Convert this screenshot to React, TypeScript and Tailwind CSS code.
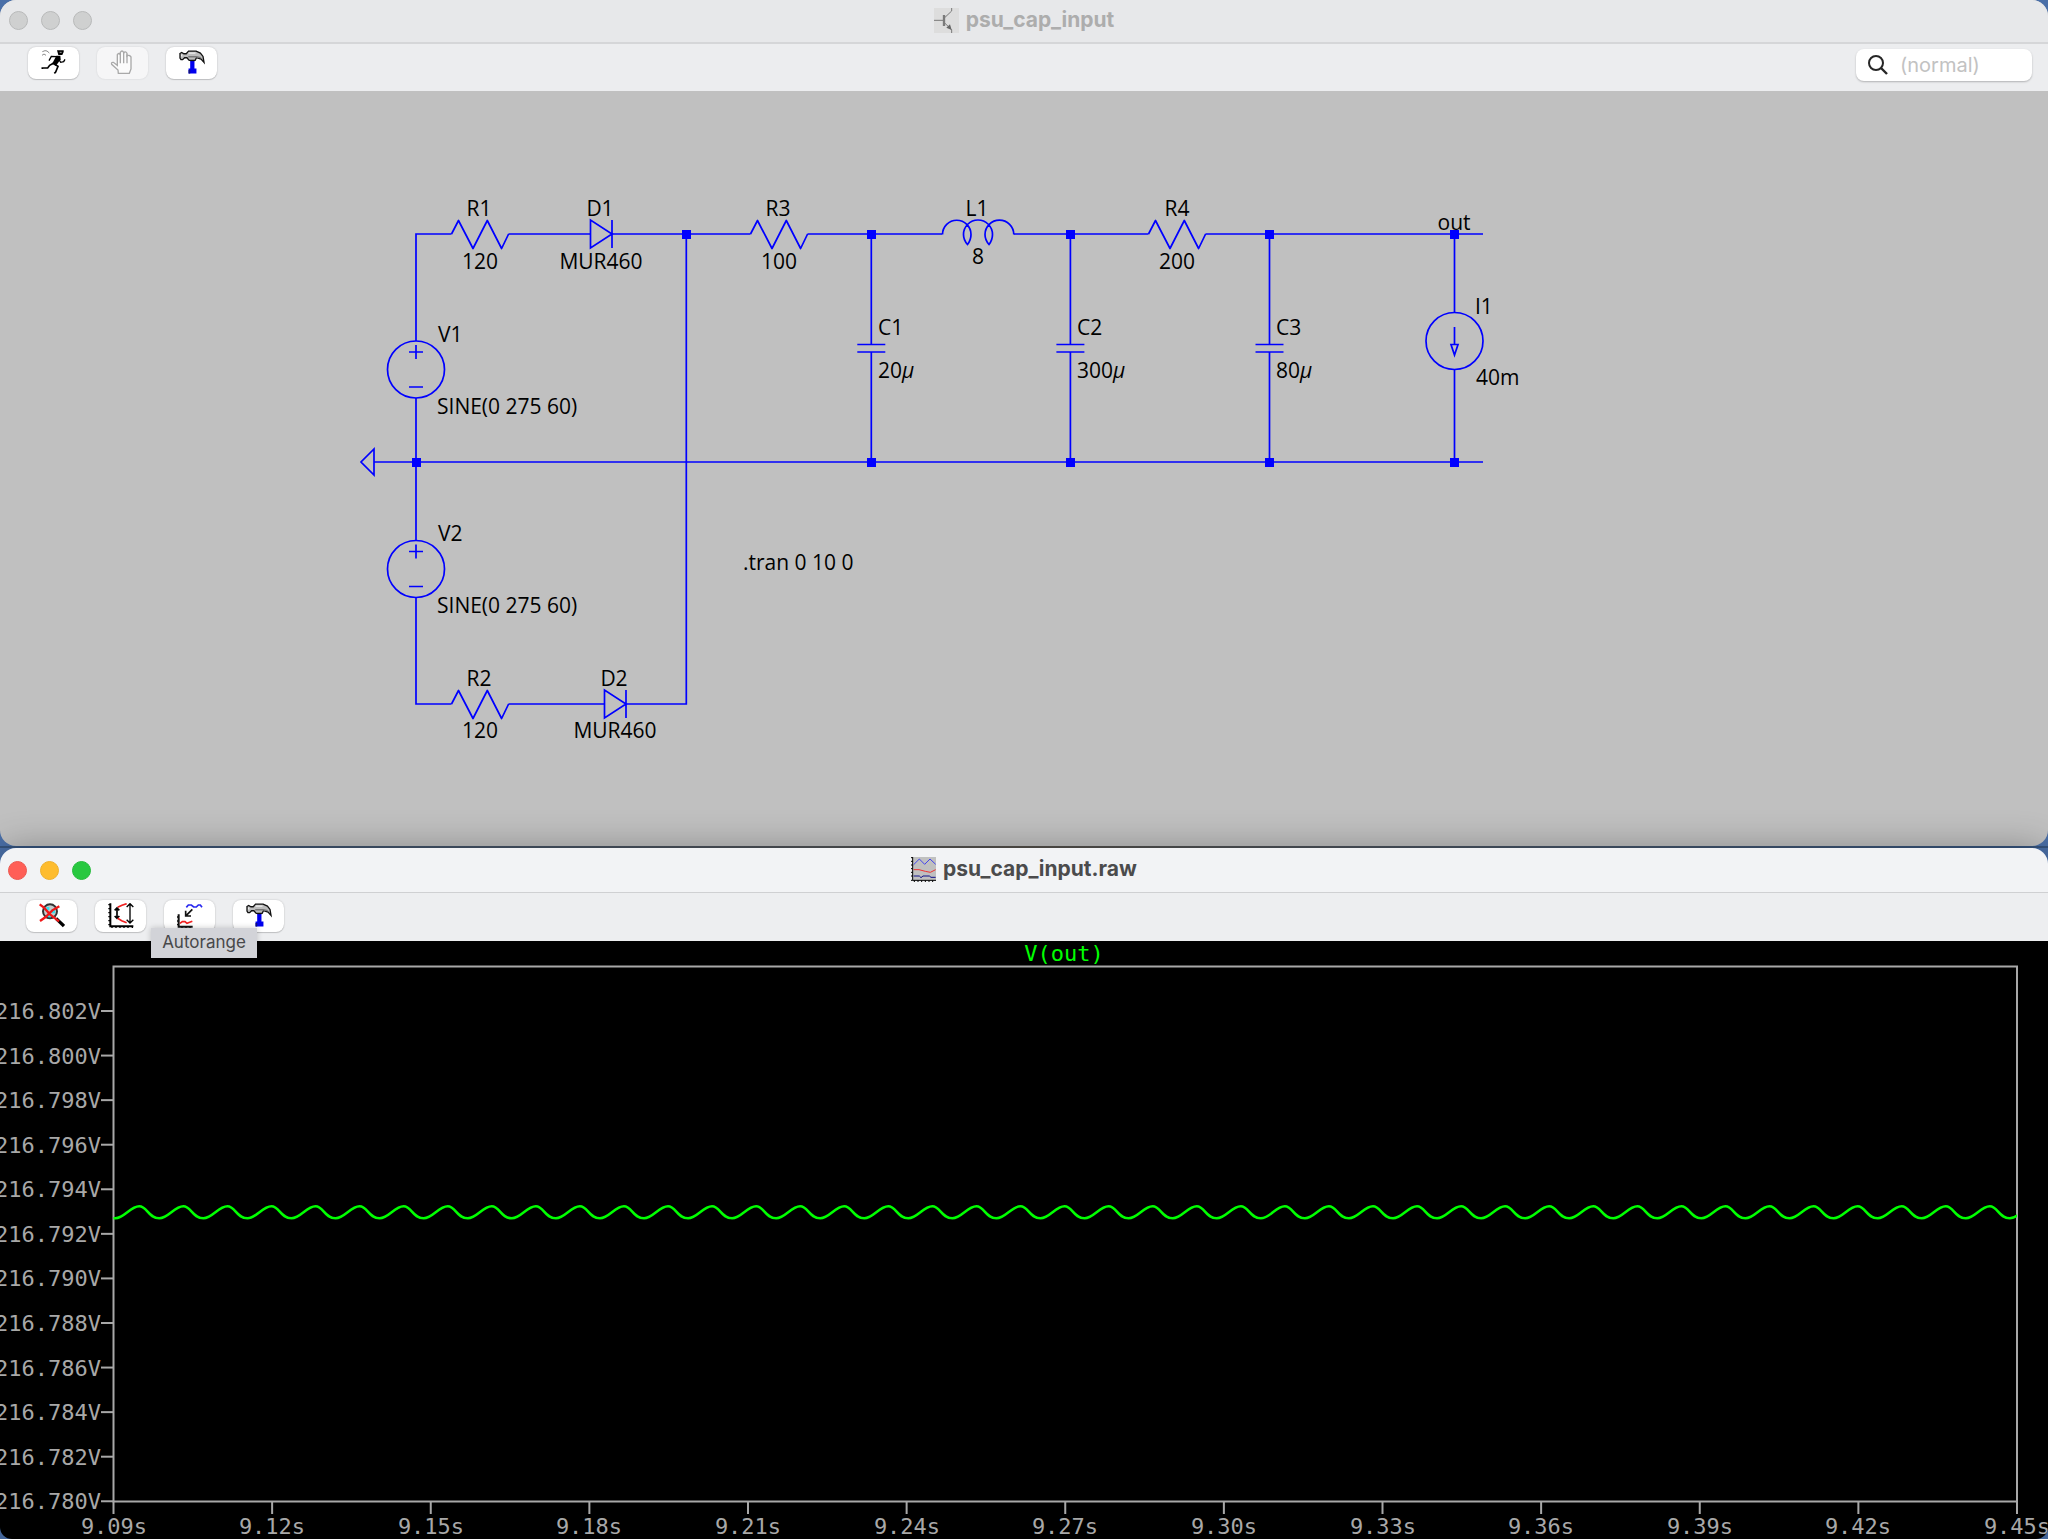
import type { ReactNode } from 'react'

interface Label {
  text: string
  x: number
  y: number
  anchor?: 'start' | 'middle'
}

const LABELS: Label[] = [
  { text: 'R1', x: 479, y: 125, anchor: 'middle' },
  { text: '120', x: 480, y: 178, anchor: 'middle' },
  { text: 'D1', x: 600, y: 125, anchor: 'middle' },
  { text: 'MUR460', x: 601, y: 178, anchor: 'middle' },
  { text: 'R3', x: 778, y: 125, anchor: 'middle' },
  { text: '100', x: 779, y: 178, anchor: 'middle' },
  { text: 'L1', x: 977, y: 125, anchor: 'middle' },
  { text: '8', x: 978, y: 173, anchor: 'middle' },
  { text: 'R4', x: 1177, y: 125, anchor: 'middle' },
  { text: '200', x: 1177, y: 178, anchor: 'middle' },
  { text: 'out', x: 1454, y: 139, anchor: 'middle' },
  { text: 'V1', x: 438, y: 251 },
  { text: 'SINE(0 275 60)', x: 437, y: 323 },
  { text: 'C1', x: 878, y: 244 },
  { text: '20µ', x: 878, y: 287 },
  { text: 'C2', x: 1077, y: 244 },
  { text: '300µ', x: 1077, y: 287 },
  { text: 'C3', x: 1276, y: 244 },
  { text: '80µ', x: 1276, y: 287 },
  { text: 'I1', x: 1475, y: 223 },
  { text: '40m', x: 1476, y: 294 },
  { text: 'V2', x: 438, y: 450 },
  { text: 'SINE(0 275 60)', x: 437, y: 522 },
  { text: 'R2', x: 479, y: 595, anchor: 'middle' },
  { text: '120', x: 480, y: 647, anchor: 'middle' },
  { text: 'D2', x: 614, y: 595, anchor: 'middle' },
  { text: 'MUR460', x: 615, y: 647, anchor: 'middle' },
  { text: '.tran 0 10 0', x: 743, y: 479 },
]

const TOP = 143
const GROUND = 371
const LOWER = 613

const JUNCTIONS = [
  [686, TOP],
  [871, TOP],
  [1070, TOP],
  [1269, TOP],
  [1454, TOP],
  [416, GROUND],
  [871, GROUND],
  [1070, GROUND],
  [1269, GROUND],
  [1454, GROUND],
]

const Y_TICKS = Array.from({ length: 12 }, (_, i) => `${(216.802 - i * 0.002).toFixed(3)}V`)
const X_TICKS = Array.from({ length: 13 }, (_, i) => `${(9.09 + i * 0.03).toFixed(2)}s`)

const PLOT = { left: 113.5, right: 2017, top: 25.5, bottom: 560.5 }
const X_STEP = (PLOT.right - PLOT.left) / 12
const Y_STEP = 44.57

function ripplePath() {
  const crest = 265.3
  const trough = 277.3
  const period = 44.06
  let d = `M 112 ${trough} H 115.3`
  for (let i = 0; i < 44; i++) {
    const start = 115.3 + i * period
    const peak = start + 24
    const end = start + period
    d += ` C ${start + 9} ${trough} ${peak - 9} ${crest} ${peak} ${crest}`
    d += ` C ${peak + 8} ${crest} ${end - 11} ${trough} ${end} ${trough}`
  }
  return d
}

function Resistor({ x, y }: { x: number; y: number }) {
  return (
    <path
      d={`M${x} ${y} l7 -13.5 l14.5 28 l14.3 -28 l14.3 28 l7 -14.5`}
      strokeLinejoin="round"
    />
  )
}

function Diode({ x, y }: { x: number; y: number }) {
  return <path d={`M${x} ${y - 14} V${y + 14} L${x + 21.5} ${y} Z M${x + 21.5} ${y - 14} v28`} />
}

function Capacitor({ x }: { x: number }) {
  return <path d={`M${x} ${TOP} V253.5 M${x - 14} 253.5 h28 M${x - 14} 261 h28 M${x} 261 V${GROUND}`} />
}

function VoltageSource({ y }: { y: number }) {
  return (
    <>
      <circle cx="416" cy={y} r="28.5" />
      <path d={`M409 ${y - 17.5} h14 M416 ${y - 24.5} v14 M409 ${y + 17.5} h14`} />
    </>
  )
}

function Schematic() {
  return (
    <svg viewBox="0 0 2048 755" className="block h-auto w-full" role="img" aria-label="Schematic">
      <g fill="none" stroke="#0000ff" strokeWidth="1.7">
        <path d={`M451.5 ${TOP} H416 V250 M416 307 V449.5 M416 506.5 V${LOWER} H451.5`} />
        <path d={`M508.5 ${TOP} H590 M611.5 ${TOP} H750.5 M807.5 ${TOP} H942 M1014 ${TOP} H1148.5 M1205.5 ${TOP} H1483`} />
        <path d={`M374 ${GROUND} H1483 M374 358 V384 L361 ${GROUND} Z`} />
        <path d={`M508.5 ${LOWER} H604.5 M626 ${LOWER} H686.3 V${TOP}`} />
        <Resistor x={451.5} y={TOP} />
        <Resistor x={750.5} y={TOP} />
        <Resistor x={1148.5} y={TOP} />
        <Resistor x={451.5} y={LOWER} />
        <Diode x={590.5} y={TOP} />
        <Diode x={604.5} y={LOWER} />
        <path d="M942.5 143.5 A14.2 14.2 0 0 1 971 143.5 Q971 149 967.5 153.5 Q963.5 149 963.5 143.5 A14.3 14.3 0 0 1 992.5 143.5 Q992.5 149 989 153.5 Q985 149 985 143.5 A14.3 14.3 0 0 1 1013.8 143.5" />
        <Capacitor x={871.3} />
        <Capacitor x={1070.4} />
        <Capacitor x={1269.5} />
        <VoltageSource y={278.5} />
        <VoltageSource y={478} />
        <circle cx="1454.5" cy="250" r="28.5" />
        <path d={`M1454.5 ${TOP} V221.5 M1454.5 278.5 V${GROUND}`} />
        <path d="M1454.5 236 V253.5 M1451 253.5 h7 l-3.5 10.5 Z" />
      </g>
      <g fill="#000000" className="font-['Open_Sans',sans-serif] text-[21px]">
        {LABELS.map((label) => (
          <text key={`${label.x}-${label.y}`} x={label.x} y={label.y} textAnchor={label.anchor}>
            {label.text.replace('µ', '')}
            {label.text.endsWith('µ') && <tspan className="italic">µ</tspan>}
          </text>
        ))}
      </g>
      <g fill="#0000ff">
        {JUNCTIONS.map(([x, y]) => (
          <rect key={`${x}-${y}`} x={x - 4} y={y - 4} width="9" height="9" />
        ))}
      </g>
    </svg>
  )
}

function Waveform() {
  return (
    <svg viewBox="0 0 2048 598" className="block h-auto w-full" role="img" aria-label="V(out)">
      <clipPath id="plot-area">
        <rect x={PLOT.left} y={PLOT.top} width={PLOT.right - PLOT.left} height={PLOT.bottom - PLOT.top} />
      </clipPath>
      <g stroke="#a8a8a8" strokeWidth="2" fill="none">
        <rect x={PLOT.left} y={PLOT.top} width={PLOT.right - PLOT.left} height={PLOT.bottom - PLOT.top} />
        {Y_TICKS.map((tick, i) => (
          <path key={tick} d={`M101 ${70 + i * Y_STEP} H${PLOT.left}`} />
        ))}
        {X_TICKS.map((tick, i) => (
          <path key={tick} d={`M${PLOT.left + i * X_STEP} ${PLOT.bottom} v12.5`} />
        ))}
      </g>
      <path d={ripplePath()} clipPath="url(#plot-area)" fill="none" stroke="#00ff00" strokeWidth="2.5" />
      <g fill="#a8a8a8" className="font-['DejaVu_Sans_Mono',monospace] text-[22px]">
        {Y_TICKS.map((tick, i) => (
          <text key={tick} x="101" y={78 + Math.round(i * Y_STEP)} textAnchor="end">
            {tick}
          </text>
        ))}
        {X_TICKS.map((tick, i) => (
          <text key={tick} x={Math.round(PLOT.left + i * X_STEP)} y="593" textAnchor="middle">
            {tick}
          </text>
        ))}
        <text x="1064" y="20" textAnchor="middle" fill="#00ff00">
          V(out)
        </text>
      </g>
    </svg>
  )
}

function RunIcon() {
  return (
    <svg viewBox="0 0 75 75" className="size-[25px]" fill="none" stroke="#000" strokeWidth="5">
      <path d="M48 1 H68 V6 L64 15 H52 Z" fill="#000" stroke="none" />
      <path d="M56 7 h6" stroke="#999" strokeWidth="3" />
      <path d="M46 17 L58 17 L59 28 L45 47 L33 42 Z" fill="#000" stroke="none" />
      <path d="M48 20 L31 19 L24 32" strokeWidth="4" />
      <path d="M54 29 L59 37 L68 35 L72 28" strokeWidth="4" />
      <path d="M37 40 L26 46 L20 54 H4 V57" />
      <path d="M41 43 L51 49 L44 66 L40 70" />
      <path d="M4 5 L12 2 L18 3 L25 9 M3 16 L9 12 L15 16" stroke="#8a8a8a" strokeWidth="3" />
    </svg>
  )
}

function HaltIcon() {
  return (
    <svg viewBox="0 0 75 75" className="size-[25px]" fill="#fbfbfb" stroke="#a9a9a9" strokeWidth="4">
      <path d="M25 70 L24 60 L5 43 Q3 36 10 37 L22 46 V14 Q26 7 31 14 V7 Q36 -1 41 7 V9 Q46 2 51 10 V18 Q57 13 63 21 V57 L58 70 Z" />
      <path d="M31 13 V40 M41 7 V40 M51 13 V40" />
    </svg>
  )
}

function HammerIcon() {
  return (
    <svg viewBox="0 0 79 75" className="h-[25px] w-[26px]" fill="none">
      <path d="M34 27 H47 V56 H53 V71 H29 V56 H34 Z" fill="#0000ee" />
      <path d="M34 27 H47 V34 H34 Z M29 60 H34 V71 H29 Z" fill="#111177" />
      <path
        d="M3 10 L8 7 L15 11 H22 L29 3 H52 L65 9 L73 19 L76 37 L67 27 L53 23 L49 31 H31 L24 23 H17 L11 29 H6 L3 24 Z"
        fill="#bdbdbd"
        stroke="#111"
        strokeWidth="4"
      />
      <path d="M29 9 H50 M8 13 V19" stroke="#eeeeee" strokeWidth="4" />
      <path d="M28 20 H52 L66 23" stroke="#777" strokeWidth="4" />
    </svg>
  )
}

function ZoomBackIcon() {
  return (
    <svg viewBox="0 0 78 75" className="h-[25px] w-[26px]" fill="none">
      <path d="M51 46 L75 69" stroke="#000" strokeWidth="10" />
      <circle cx="33" cy="25" r="21" fill="#c5cccc" stroke="#333" strokeWidth="6" />
      <path d="M22 12 h9 v9 h-9 Z M38 18 h10 v13 h-10 Z M27 35 h9 v8 h-9 Z" fill="#35e0ee" />
      <path d="M2 4 L14 13 L33 34 L60 55 M61 10 L40 22 L20 42 L3 54" stroke="#f01818" strokeWidth="7" />
    </svg>
  )
}

function AxesIcon() {
  return (
    <svg viewBox="0 0 78 75" className="h-[25px] w-[26px]" fill="none" stroke="#000" strokeWidth="5">
      <path d="M7 1 V70 H76" strokeWidth="6" />
      <path d="M1 5 h6 M1 17 h6 M1 29 h6 M1 41 h6 M1 53 h6 M1 65 h6 M12 75 v-5 M24 75 v-5 M36 75 v-5 M48 75 v-5 M60 75 v-5 M73 75 v-5" strokeWidth="4" />
      <path d="M27 15 V46 M20 22 L27 15 L34 22 M20 39 L27 46 L34 39" />
      <path d="M66 2 V60 M56 12 L66 2 L76 12 M56 50 L66 60 L76 50" strokeWidth="4" />
      <path d="M29 13 L42 7 L56 2 M29 46 L41 53 L56 59" stroke="#f02020" />
    </svg>
  )
}

function AutorangeIcon() {
  return (
    <svg viewBox="0 0 78 75" className="h-[25px] w-[26px]" fill="none" stroke="#111" strokeWidth="5">
      <path d="M28 13 L34 6 H43 L50 12 H58 L64 6 H70 L75 13" stroke="#2828f0" />
      <path d="M46 19 L28 37 M26 23 V39 H42" />
      <path d="M5 34 V71 H47" strokeWidth="6" />
      <path d="M0 42 h5 M0 54 h5 M0 65 h5 M15 75 v-5 M27 75 v-5 M39 75 v-5" strokeWidth="4" />
      <path d="M9 61 L16 56 L24 56 L30 61 L38 58 L46 55" stroke="#f02020" />
    </svg>
  )
}

function TransistorIcon() {
  return (
    <svg viewBox="0 0 75 75" className="size-[25px] bg-[#dddddd]" fill="none" stroke="#7a7a7a" strokeWidth="3">
      <path d="M0 37 H28" />
      <path d="M30 21 V54" strokeWidth="7" />
      <path d="M33 28 L53 9 V0 M33 46 L53 65 V75" />
      <path d="M53 66 L37 59 L48 49 Z" fill="#666" stroke="none" />
    </svg>
  )
}

function RawFileIcon() {
  return (
    <svg viewBox="0 0 75 75" className="size-[25px]" fill="none" strokeWidth="3">
      <rect x="5" width="70" height="70" fill="#c0c0c0" />
      <path d="M8 23 L25 6 L41 22 L57 6 L74 22" stroke="#4444ee" />
      <path d="M8 38 H24 L43 43 L58 46 L74 38" stroke="#ee3333" />
      <path d="M8 57 H25 L30 62 L36 57 H55 L60 61 H74" stroke="#111188" />
      <path d="M5 0 V70 H75 M0 2 h5 M0 13 h5 M0 24 h5 M0 35 h5 M0 46 h5 M0 57 h5 M0 70 h5 M10 75 v-5 M21 75 v-5 M32 75 v-5 M43 75 v-5 M54 75 v-5 M65 75 v-5" stroke="#000" />
    </svg>
  )
}

function ToolButton({ label, disabled, children }: { label: string; disabled?: boolean; children: ReactNode }) {
  return (
    <button
      type="button"
      aria-label={label}
      disabled={disabled}
      className="flex h-8 w-[51px] items-start justify-center rounded-lg bg-white pt-[3px] shadow-[0_0_2px_rgba(0,0,0,0.2),0_1px_1px_rgba(0,0,0,0.15)] disabled:bg-[#f6f6f7] disabled:shadow-[0_0_2px_rgba(0,0,0,0.12)]"
    >
      {children}
    </button>
  )
}

function WindowLights({ active }: { active?: boolean }) {
  const dot = 'size-[19px] rounded-full border'
  if (!active) {
    return (
      <div className="flex gap-[13px]">
        <span className={`${dot} border-[#b8b9b9] bg-[#cfd0d0]`} />
        <span className={`${dot} border-[#b8b9b9] bg-[#cfd0d0]`} />
        <span className={`${dot} border-[#b8b9b9] bg-[#cfd0d0]`} />
      </div>
    )
  }
  return (
    <div className="flex gap-[13px]">
      <span className={`${dot} border-[#ec5850] bg-[#ff5f57]`} />
      <span className={`${dot} border-[#eeb02c] bg-[#febc2e]`} />
      <span className={`${dot} border-[#25bb3b] bg-[#28c840]`} />
    </div>
  )
}

export default function App() {
  return (
    <main className="flex min-h-screen flex-col bg-[#4a6fa8] font-['Inter',sans-serif]">
      <section className="overflow-hidden rounded-2xl bg-[#c0c0c0]">
        <header className="grid h-11 grid-cols-[1fr_auto_1fr] items-center border-b-2 border-[#d5d6d8] bg-[#e7e8ea] px-[9px] pb-[2px]">
          <WindowLights />
          <h1 className="flex items-center gap-[7px] text-[21px] leading-6 font-bold text-[#adadad]">
            <TransistorIcon />
            psu_cap_input
          </h1>
        </header>
        <div className="flex h-[47px] items-start justify-between bg-[#ecedef] pt-[3px] pr-4 pl-7">
          <div className="flex gap-[18px]">
            <ToolButton label="Run">
              <RunIcon />
            </ToolButton>
            <ToolButton label="Halt" disabled>
              <HaltIcon />
            </ToolButton>
            <ToolButton label="Control panel">
              <HammerIcon />
            </ToolButton>
          </div>
          <label className="mt-[2px] flex h-8 w-44 items-center gap-3 rounded-lg bg-white pl-3 shadow-[0_1px_2px_rgba(0,0,0,0.25)]">
            <svg viewBox="0 0 20 20" className="size-5 shrink-0" fill="none" stroke="#262626" strokeWidth="2">
              <circle cx="8" cy="8" r="7" />
              <path d="M13 13 L19 19" strokeWidth="2.4" />
            </svg>
            <input
              type="text"
              aria-label="Search"
              placeholder="(normal)"
              className="w-full min-w-0 bg-transparent text-[20px] outline-none placeholder:text-[#c2c2c2]"
            />
          </label>
        </div>
        <Schematic />
      </section>

      <div className="h-[2px] bg-linear-to-r from-[#35547f] via-[#54504a] to-[#35547f]" />

      <section className="relative rounded-2xl shadow-[0_0_36px_rgba(0,0,0,0.3)]">
        <header className="grid h-[45px] grid-cols-[1fr_auto_1fr] items-center rounded-t-2xl border-b border-[#cfd0d2] bg-[#f2f3f5] px-2">
          <WindowLights active />
          <h2 className="flex items-center gap-[7px] pb-[2px] text-[21px] leading-6 font-bold text-[#4b4b4c]">
            <RawFileIcon />
            psu_cap_input.raw
          </h2>
        </header>
        <div className="flex h-12 items-start gap-[18px] bg-[#edeef0] pt-[7px] pl-[26px]">
          <ToolButton label="Zoom back">
            <ZoomBackIcon />
          </ToolButton>
          <ToolButton label="Axis limits">
            <AxesIcon />
          </ToolButton>
          <div className="relative">
            <ToolButton label="Autorange">
              <AutorangeIcon />
            </ToolButton>
            <div
              role="tooltip"
              className="absolute top-7 -left-[13px] z-10 flex h-[30px] w-[106px] items-center justify-center bg-[#d2d3d8] text-[17px] text-[#48484a] shadow-[0_0_6px_rgba(0,0,0,0.2)]"
            >
              Autorange
            </div>
          </div>
          <ToolButton label="Control panel">
            <HammerIcon />
          </ToolButton>
        </div>
        <div className="overflow-hidden rounded-b-xl bg-black">
          <Waveform />
        </div>
      </section>
    </main>
  )
}
